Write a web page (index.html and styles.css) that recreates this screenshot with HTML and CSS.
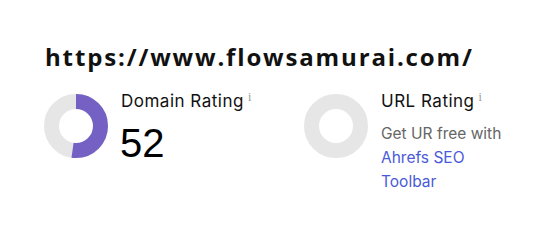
FILE: index.html
```html
<!DOCTYPE html>
<html>
<head>
<meta charset="utf-8">
<link rel="stylesheet" href="styles.css">
</head>
<body>
<div class="card">
  <h1 class="url">https://www.flowsamurai.com/</h1>
  <div class="metrics">
    <div class="metric">
      <svg class="donut" width="64" height="64" viewBox="0 0 64 64">
        <circle cx="32" cy="32" r="24.5" fill="none" stroke="#e6e6e6" stroke-width="15"/>
        <circle cx="32" cy="32" r="24.5" fill="none" stroke="#7561c4" stroke-width="15" stroke-dasharray="80.05 200" transform="rotate(-90 32 32)"/>
      </svg>
      <div class="info">
        <div class="label">Domain Rating<sup class="tip">i</sup></div>
        <div class="value">52</div>
      </div>
    </div>
    <div class="metric">
      <svg class="donut" width="64" height="64" viewBox="0 0 64 64">
        <circle cx="32" cy="32" r="24.5" fill="none" stroke="#e6e6e6" stroke-width="15"/>
      </svg>
      <div class="info">
        <div class="label">URL Rating<sup class="tip">i</sup></div>
        <div class="note">Get UR free with <a class="link" href="#">Ahrefs SEO Toolbar</a></div>
      </div>
    </div>
  </div>
</div>
</body>
</html>
```
FILE: styles.css
```css
html, body {
  margin: 0;
  background: #fff;
}
.card {
  padding: 42px 0 0 44px;
  font-family: Inter, "Liberation Sans", sans-serif;
  color: #111;
}
.url {
  margin: 0 0 0 1px;
  font-family: "Open Sans", sans-serif;
  font-weight: bold;
  font-size: 24px;
  line-height: 30px;
  letter-spacing: 1.85px;
  color: #111;
}
.metrics {
  display: flex;
  margin-top: 18px;
}
.metric {
  display: flex;
  flex: none;
  width: 260px;
  gap: 13px;
}
.donut {
  flex: none;
  margin-top: 4px;
}
.info {
  display: flex;
  flex-direction: column;
}
.label {
  font-size: 17px;
  line-height: 22px;
  letter-spacing: 0.5px;
  color: #111;
}
.tip {
  font-family: "Liberation Serif", serif;
  font-size: 12px;
  color: #999;
  margin-left: 4px;
  vertical-align: 6px;
  line-height: 0;
}
.value {
  margin-top: 11px;
  margin-left: -1px;
  font-family: "Liberation Sans", sans-serif;
  font-size: 40px;
  line-height: 40px;
  color: #000;
}
.note {
  width: 130px;
  margin-top: 10px;
  font-size: 15.5px;
  line-height: 24px;
  color: #666;
}
.link {
  color: #4a5ad8;
  text-decoration: none;
}
```
